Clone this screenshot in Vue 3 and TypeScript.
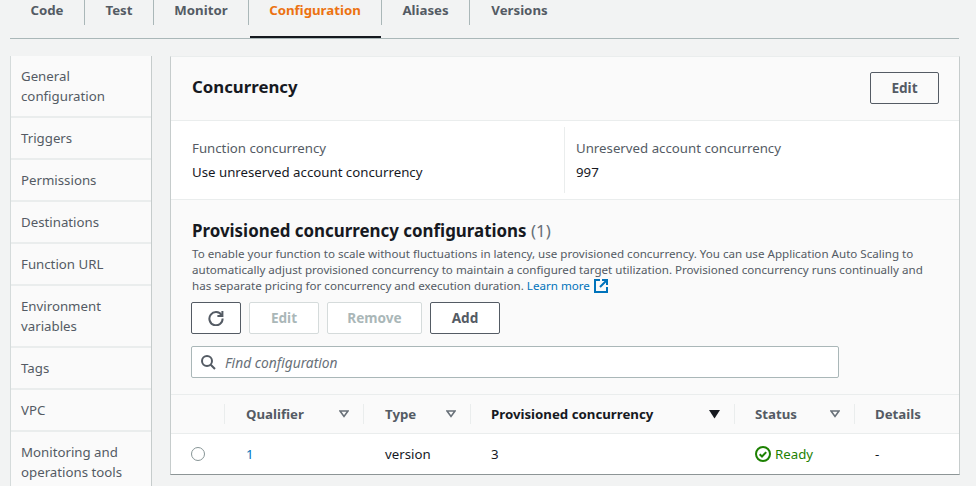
<script setup lang="ts">
const tabs = ['Code', 'Test', 'Monitor', 'Configuration', 'Aliases', 'Versions']
const sideItems = [
  'General configuration',
  'Triggers',
  'Permissions',
  'Destinations',
  'Function URL',
  'Environment variables',
  'Tags',
  'VPC',
  'Monitoring and operations tools',
]
</script>

<template>
  <div class="page">
    <div class="tabs">
      <div
        v-for="t in tabs"
        :key="t"
        class="tab"
        :class="['tab-' + t.toLowerCase(), { active: t === 'Configuration' }]"
      >
        <span class="tab-label">{{ t }}</span>
      </div>
    </div>

    <div class="body">
      <ul class="side">
        <li v-for="s in sideItems" :key="s">{{ s }}</li>
      </ul>

      <div class="card">
        <div class="card-head">
          <h2>Concurrency</h2>
          <button class="btn edit-top">Edit</button>
        </div>

        <div class="info">
          <div class="info-col first">
            <div class="label">Function concurrency</div>
            <div class="value">Use unreserved account concurrency</div>
          </div>
          <div class="info-col">
            <div class="label">Unreserved account concurrency</div>
            <div class="value">997</div>
          </div>
        </div>

        <div class="prov">
          <h3>Provisioned concurrency configurations <span class="count">(1)</span></h3>
          <p class="desc">
            To enable your function to scale without fluctuations in latency, use provisioned concurrency. You can use Application Auto Scaling to
            automatically adjust provisioned concurrency to maintain a configured target utilization. Provisioned concurrency runs continually and
            has separate pricing for concurrency and execution duration.
            <a class="link">Learn more</a>
            <svg class="ext" width="14" height="14" viewBox="0 0 14 14" fill="none" stroke="#0073bb" stroke-width="2">
              <path d="M6 1H1v12h12V8" />
              <path d="M8 1h5v5M13 1L6 8" />
            </svg>
          </p>
          <div class="actions">
            <button class="btn refresh" aria-label="Refresh">
              <svg width="16" height="16" viewBox="0 0 16 16" fill="none" stroke="#545b64" stroke-width="2">
                <path d="M13.6 5.2A6.6 6.6 0 1 0 14.6 8.5" />
                <path d="M14.4 1v5h-5" />
              </svg>
            </button>
            <button class="btn disabled small-edit">Edit</button>
            <button class="btn disabled remove">Remove</button>
            <button class="btn add">Add</button>
          </div>
          <div class="search">
            <svg width="16" height="16" viewBox="0 0 16 16" fill="none" stroke="#545b64" stroke-width="2">
              <circle cx="7" cy="7" r="5" />
              <path d="M10.7 10.7L15 15" />
            </svg>
            <span>Find configuration</span>
          </div>
        </div>

        <div class="table">
          <div class="row head">
            <div class="cell c-radio"></div>
            <div class="cell c-qual">
              <span>Qualifier</span>
              <svg class="sort" width="10" height="8" viewBox="0 0 10 8" fill="none" stroke="#687078" stroke-width="1.6"><path d="M1 1h8L5 6.4z" /></svg>
            </div>
            <div class="cell c-type">
              <span>Type</span>
              <svg class="sort" width="10" height="8" viewBox="0 0 10 8" fill="none" stroke="#687078" stroke-width="1.6"><path d="M1 1h8L5 6.4z" /></svg>
            </div>
            <div class="cell c-prov sorted">
              <span>Provisioned concurrency</span>
              <svg class="sort" width="11" height="9" viewBox="0 0 11 9" fill="#16191f"><path d="M0 0h11L5.5 8.5z" /></svg>
            </div>
            <div class="cell c-status">
              <span>Status</span>
              <svg class="sort" width="10" height="8" viewBox="0 0 10 8" fill="none" stroke="#687078" stroke-width="1.6"><path d="M1 1h8L5 6.4z" /></svg>
            </div>
            <div class="cell c-details"><span>Details</span></div>
          </div>
          <div class="row data">
            <div class="cell c-radio"><span class="radio"></span></div>
            <div class="cell c-qual"><a class="link">1</a></div>
            <div class="cell c-type">version</div>
            <div class="cell c-prov">3</div>
            <div class="cell c-status ready">
              <svg width="16" height="16" viewBox="0 0 16 16" fill="none" stroke="#1d8102" stroke-width="2">
                <circle cx="8" cy="8" r="7" />
                <path d="M4.7 8.2l2.3 2.3 4.2-4.4" />
              </svg>
              <span>Ready</span>
            </div>
            <div class="cell c-details">-</div>
          </div>
        </div>
      </div>
    </div>
  </div>
</template>

<style>
html,
body {
  margin: 0;
  background: #f2f3f3;
  overflow: hidden;
}
</style>

<style scoped>
.page {
  width: 976px;
  height: 486px;
  overflow: hidden;
  background: #f2f3f3;
  font-family: 'Noto Sans', 'Open Sans', sans-serif;
  font-size: 13.25px;
  color: #16191f;
}

.tabs {
  display: flex;
  height: 39px;
  margin: 0 17px 0 10px;
  border-bottom: 1px solid #aab7b8;
  box-sizing: border-box;
}

.tab {
  height: 25px;
  border-right: 1px solid #aab7b8;
  text-align: center;
  font-weight: 700;
  color: #545b64;
  line-height: 20px;
  position: relative;
}

.tab-code { width: 74px; }
.tab-test { width: 68px; }
.tab-monitor { width: 94px; }
.tab-configuration { width: 132px; }
.tab-aliases { width: 87px; }
.tab-versions { width: 99px; border-right: none; }

.tab.active {
  color: #ec7211;
}

.tab.active::after {
  content: '';
  position: absolute;
  left: 1px;
  right: 0;
  top: 36px;
  height: 2px;
  background: #16191f;
}

.body {
  display: flex;
  gap: 18px;
  padding: 17px 16px 0 10px;
  align-items: flex-start;
}

.side {
  list-style: none;
  margin: 0;
  padding: 0;
  width: 142px;
  flex: none;
  box-sizing: border-box;
  border-left: 1px solid #d5dbdb;
  border-right: 1px solid #c6cccc;
}

.side li {
  background: #fafafa;
  color: #545b64;
  padding: 10px;
  line-height: 20px;
  border-bottom: 2px solid #eaeded;
}

.card {
  flex: 1;
  min-width: 0;
  height: 419px;
  background: #fff;
  box-sizing: border-box;
  border-top: 1px solid #eaeded;
  border-left: 1px solid #c6cccc;
  border-right: 1px solid #c6cccc;
  border-bottom: 1px solid #8d9596;
  display: flex;
  flex-direction: column;
}

.card-head {
  height: 64px;
  box-sizing: border-box;
  background: #fafafa;
  border-bottom: 1px solid #eaeded;
  display: flex;
  align-items: center;
  justify-content: space-between;
  padding: 0 20px 1px 21px;
  flex: none;
}

.card-head h2 {
  margin: 0;
  font-size: 16.8px;
  line-height: 22px;
  font-weight: 700;
  position: relative;
  top: -1px;
}

.btn {
  font-family: inherit;
  font-size: 13.6px;
  font-weight: 700;
  line-height: 20px;
  height: 32px;
  padding: 0;
  border: 1px solid #545b64;
  border-radius: 2px;
  background: #fff;
  color: #545b64;
  box-sizing: border-box;
  display: flex;
  align-items: center;
  justify-content: center;
}

.edit-top {
  width: 69px;
  background: #fafafa;
}

.info {
  display: grid;
  grid-template-columns: 393px 1fr;
  height: 79px;
  background: #fff;
  border-bottom: 1px solid #eaeded;
  box-sizing: border-box;
  flex: none;
}

.info-col {
  padding: 9px 0 0 11px;
  margin: 6px 0;
  border-left: 1px solid #eaeded;
}

.info-col.first {
  padding-left: 21px;
  border-left: none;
}

.label {
  color: #545b64;
  line-height: 24px;
}

.value {
  line-height: 24px;
}

.prov {
  background: #fafafa;
  padding: 19px 20px 0 21px;
  height: 195px;
  box-sizing: border-box;
  border-bottom: 1px solid #eaeded;
  flex: none;
}

.prov h3 {
  margin: 0;
  font-size: 16.9px;
  line-height: 24px;
  font-weight: 700;
}

.count {
  font-weight: 400;
  color: #687078;
}

.desc {
  margin: 3px 0 0;
  width: 738px;
  font-size: 11.6px;
  line-height: 16px;
  color: #545b64;
}

.link {
  color: #0073bb;
}

.ext {
  vertical-align: -3px;
  margin-left: 4px;
}

.actions {
  display: flex;
  gap: 8px;
  margin: 8px 0 0 -1px;
}

.refresh { width: 50px; }
.small-edit { width: 70px; }
.remove { width: 95px; }
.add { width: 70px; }

.btn.disabled {
  border-color: #d5dbdb;
  color: #aab7b8;
  background: #fff;
}

.search {
  margin: 12px 0 0 -1px;
  width: 648px;
  height: 32px;
  background: #fff;
  border: 1px solid #aab7b8;
  border-radius: 2px;
  box-sizing: border-box;
  display: flex;
  align-items: center;
  gap: 9px;
  padding-left: 8px;
  font-size: 13.8px;
  font-style: italic;
  color: #687078;
}

.table {
  flex: 1;
  min-height: 0;
}

.row {
  display: grid;
  grid-template-columns: 53px 139px 107px 264px 120px 1fr;
  align-items: center;
}

.row.head {
  height: 39px;
  background: #fafafa;
  border-bottom: 1px solid #eaeded;
  box-sizing: border-box;
  font-weight: 700;
  color: #545b64;
}

.row.data {
  height: 40px;
  background: #fff;
}

.cell {
  padding-left: 21px;
  box-sizing: border-box;
  display: flex;
  align-items: center;
  justify-content: space-between;
}

.row.head .cell {
  height: 20px;
  border-left: 1px solid #eaeded;
}

.row.head .c-radio {
  border-left: none;
}

.row.head .c-prov,
.row.head .c-status,
.row.head .c-details {
  padding-left: 20px;
}

.row.data .c-qual,
.row.data .c-type {
  padding-left: 22px;
}

.cell.sorted {
  color: #16191f;
}

.sort {
  margin-right: 14px;
}

.c-radio {
  padding-left: 20px;
}

.row.data .cell {
  justify-content: flex-start;
}

.radio {
  width: 14px;
  height: 14px;
  border: 1px solid #879596;
  border-radius: 50%;
  box-sizing: border-box;
  background: #fff;
}

.ready {
  color: #1d8102;
  gap: 4px;
}
</style>
